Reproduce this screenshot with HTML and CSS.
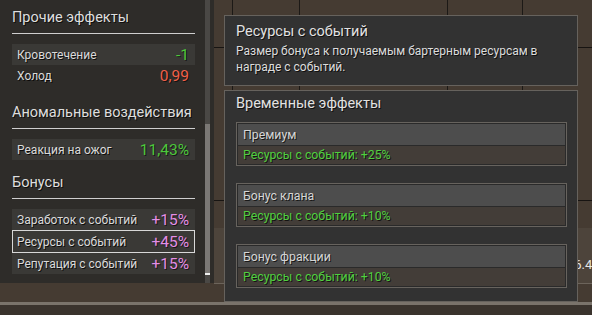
FILE: index.html
```html
<!DOCTYPE html>
<html lang="ru">
<head>
<meta charset="utf-8">
<link rel="stylesheet" href="styles.css">
</head>
<body>
<div class="screen">
  <div class="main">
    <aside class="sidebar">
      <div class="list">
        <section class="group">
          <h3 class="group-title">Прочие эффекты</h3>
          <div class="row shaded"><span class="label">Кровотечение</span><span class="val green">-1</span></div>
          <div class="row"><span class="label">Холод</span><span class="val red">0,99</span></div>
        </section>
        <section class="group g2">
          <h3 class="group-title">Аномальные воздействия</h3>
          <div class="row shaded"><span class="label">Реакция на ожог</span><span class="val green">11,43%</span></div>
        </section>
        <section class="group g3">
          <h3 class="group-title">Бонусы</h3>
          <div class="row shaded"><span class="label">Заработок с событий</span><span class="val pink">+15%</span></div>
          <div class="row shaded selected"><span class="label">Ресурсы с событий</span><span class="val pink">+45%</span></div>
          <div class="row shaded"><span class="label">Репутация с событий</span><span class="val pink">+15%</span></div>
        </section>
      </div>
      <div class="scroll"><div class="thumb"></div></div>
    </aside>
    <div class="board">
      <div class="brow r1"><div class="cell c1"></div><div class="cell c2"></div><div class="cell c3"></div><div class="cell c4"></div><div class="cell c5"></div></div>
      <div class="brow r2"><div class="cell c1"></div><div class="cell c2"></div><div class="cell c3"></div><div class="cell c4"></div><div class="cell c5"></div></div>
      <div class="brow r3"></div>
      <div class="brow r4"><span class="num">16.45</span></div>
      <div class="brow r5"></div>
    </div>
  </div>
  <div class="footer"></div>

  <div class="tooltip">
    <div class="tip-box">
      <div class="tip-title">Ресурсы с событий</div>
      <div class="tip-desc">Размер бонуса к получаемым бартерным ресурсам в награде с событий.</div>
    </div>
    <div class="tip-box effects">
      <div class="tip-title">Временные эффекты</div>
      <div class="cards">
        <div class="card"><div class="card-head">Премиум</div><div class="card-body">Ресурсы с событий: +25%</div></div>
        <div class="card"><div class="card-head">Бонус клана</div><div class="card-body">Ресурсы с событий: +10%</div></div>
        <div class="card"><div class="card-head">Бонус фракции</div><div class="card-body">Ресурсы с событий: +10%</div></div>
      </div>
    </div>
  </div>
</div>
</body>
</html>
```

FILE: styles.css
```css
* { box-sizing: border-box; }
html, body { margin: 0; padding: 0; }
body {
  width: 592px;
  height: 315px;
  overflow: hidden;
  background: #38322c;
  font-family: Roboto, "Noto Sans", sans-serif;
  color: #d9d9d9;
}
.screen { position: relative; width: 592px; height: 315px; display: flex; flex-direction: column; }
.main { height: 302px; display: flex; background: #453b32; }
.footer { height: 13px; border-top: 3px solid #7a736b; background: #3a332d; }

/* sidebar */
.sidebar { width: 214px; height: 283px; background: #2e2c29; display: flex; flex: none; }
.list { width: 205px; padding: 9px 10px 0 12px; }
.group-title {
  margin: 0 0 10px;
  font-size: 14.5px;
  line-height: 18px;
  font-weight: normal;
  color: #dedede;
  padding-bottom: 6px;
  border-bottom: 1px solid #cfcfcf;
  text-shadow: 1px 1px 0 rgba(0,0,0,.7);
}
.g2 { margin-top: 18px; }
.g3 { margin-top: 14px; }
.row {
  height: 21px;
  display: flex;
  align-items: center;
  justify-content: space-between;
  padding: 0 6px 0 5px;
}
.row.shaded { background: #3a3936; }
.row.selected { height: 23px; border: 1px solid #d8d8d8; padding: 0 5px 0 4px; }
.label { font-size: 12px; color: #dadada; text-shadow: 1px 1px 0 rgba(0,0,0,.75); }
.val { font-size: 15.5px; text-shadow: 1px 1px 0 rgba(0,0,0,.6); }
.green { color: #4cc83c; }
.red { color: #f0604a; }
.pink { color: #e48ee6; }

.scroll { width: 5px; margin-right: 4px; background: #4a4845; }
.thumb { margin-top: 124px; height: 151px; background: #7b7875; border-bottom: 2px solid #eeeeee; }

/* background board */
.board { flex: 1; display: flex; flex-direction: column; }
.brow { display: flex; }
.r1 { height: 48px; border-bottom: 1px solid #171412; }
.r2 { height: 153px; border-bottom: 1px solid #171412; }
.r3 { height: 27px; }
.r4 { height: 56px; background: #4d443b; border-bottom: 1px solid #6c645b; align-items: center; padding-left: 353px; padding-top: 18px; }
.r5 { flex: 1; }
.cell { border-right: 1px solid #1c1916; }
.c1 { width: 19px; }
.c2 { width: 67px; }
.c3 { width: 148px; }
.c4 { width: 75px; }
.c5 { flex: 1; border-right: 0; }
.num { font-size: 13px; color: #e6e6e6; }

/* tooltip */
.tooltip {
  position: absolute;
  left: 224px;
  top: 15px;
  width: 354px;
  display: flex;
  flex-direction: column;
  gap: 4px;
}
.tip-box {
  background: #323232;
  border: 1px solid #66625d;
  padding: 7px 11px 10px;
}
.tip-title { font-size: 14.5px; line-height: 18px; color: #e2e2e2; text-shadow: 1px 1px 0 rgba(0,0,0,.7); }
.tip-desc { margin-top: 2px; font-size: 12px; line-height: 16px; color: #dcdcdc; text-shadow: 1px 1px 0 rgba(0,0,0,.7); }
.effects { padding: 4px 10px 13px 11px; }
.cards { margin-top: 9px; display: flex; flex-direction: column; gap: 17px; }
.card { border: 1px solid #67635e; }
.card-head {
  height: 23px;
  background: #4d4d4d;
  border: 1px solid #2a2a2a;
  padding-left: 5px;
  font-size: 12.3px;
  line-height: 22px;
  color: #d6d6d6;
  text-shadow: 1px 1px 0 rgba(0,0,0,.7);
}
.card-body {
  height: 19px;
  background: #433d38;
  border: 1px solid #2a2a2a;
  border-top: 0;
  padding-left: 5px;
  font-size: 12.3px;
  line-height: 19px;
  color: #4fd040;
  text-shadow: 1px 1px 0 rgba(0,0,0,.7);
}
```
